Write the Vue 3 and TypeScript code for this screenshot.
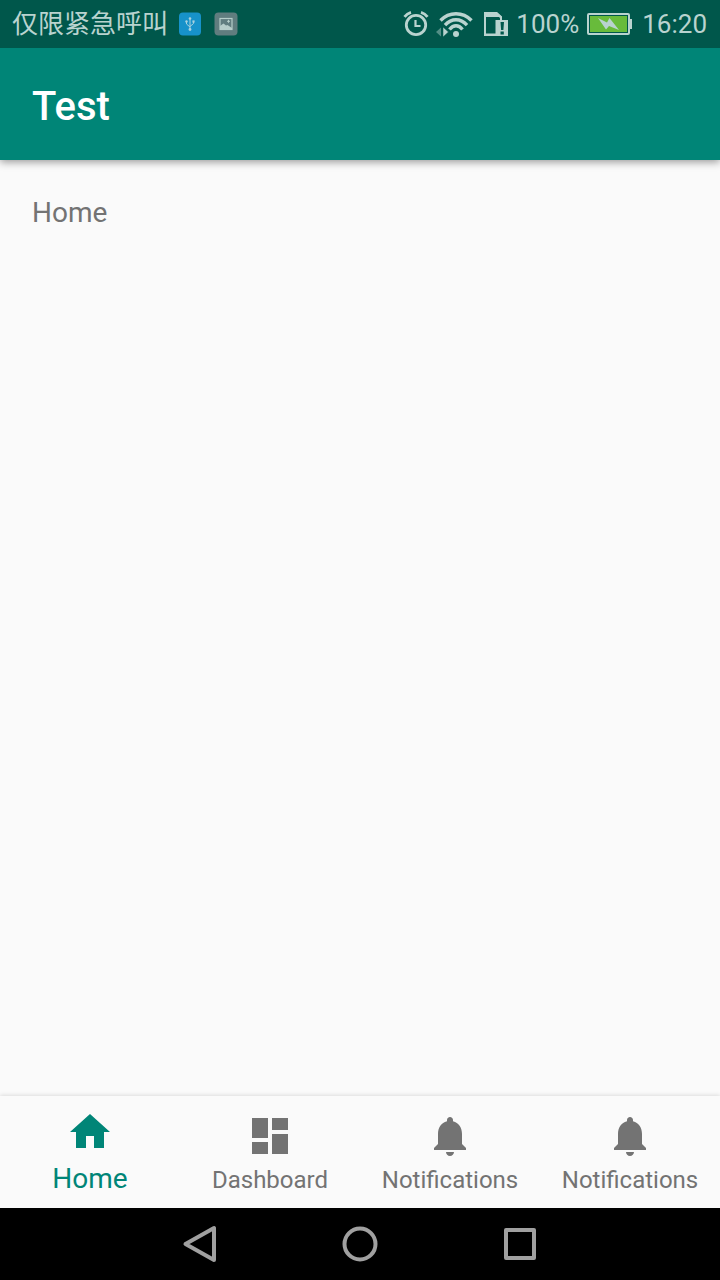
<script setup lang="ts">
import { ref } from 'vue'

interface Tab {
  id: string
  label: string
  icon: string
}

const bell =
  'M12 22c1.1 0 2-.9 2-2h-4c0 1.1.89 2 2 2zm6-6v-5c0-3.07-1.64-5.64-4.5-6.32V4c0-.83-.67-1.5-1.5-1.5s-1.5.67-1.5 1.5v.68C7.63 5.36 6 7.92 6 11v5l-2 2v1h16v-1l-2-2z'

const tabs: Tab[] = [
  { id: 'home', label: 'Home', icon: 'M10 20v-6h4v6h5v-8h3L12 3 2 12h3v8z' },
  { id: 'dashboard', label: 'Dashboard', icon: 'M3 13h8V3H3v10zm0 8h8v-6H3v6zm10 0h8V11h-8v10zm0-18v6h8V3h-8z' },
  { id: 'notifications', label: 'Notifications', icon: bell },
  { id: 'notifications-2', label: 'Notifications', icon: bell },
]

const selected = ref<Tab>(tabs[0])
</script>

<template>
  <div class="screen">
    <div class="status">
      <span class="carrier">仅限紧急呼叫</span>
      <svg class="usb" width="24" height="24" viewBox="0 0 24 24" aria-hidden="true">
        <rect x="1" y="0.5" width="22" height="23" rx="4" fill="#1792ca" />
        <g fill="none" stroke="#a9d2df" stroke-width="1">
          <path d="M12 6v12M8.500 9v3l3.500 3M15.500 9v2.500l-3.500 3" />
        </g>
        <g fill="#a9d2df">
          <circle cx="12" cy="6.500" r="1.300" />
          <circle cx="8.500" cy="9.500" r="1.200" />
          <rect x="14.400" y="8.400" width="2.200" height="2.200" />
          <circle cx="12" cy="17.500" r="1.400" />
        </g>
      </svg>
      <svg class="shot" width="24" height="24" viewBox="0 0 24 24" aria-hidden="true">
        <rect x="0.500" y="0.500" width="23" height="23" rx="4" fill="#607d7f" />
        <rect x="6" y="6.500" width="12" height="11" fill="none" stroke="#b5cdc9" stroke-width="1.200" />
        <path d="M6 14l3.500-2.500 2.500 2 1.500-.5 4.500 3v1.500H6z" fill="#b5cdc9" />
        <path d="M14.500 7.800v3M13 9.300h3" stroke="#b5cdc9" />
      </svg>
      <span class="grow"></span>
      <svg class="alarm" width="28" height="28" viewBox="0 0 28 28" aria-hidden="true">
        <g fill="none" stroke="currentColor">
          <circle cx="14" cy="15" r="9.700" stroke-width="2.800" />
          <path d="M13.500 10v6h5" stroke-width="2.200" />
          <path d="M2.500 6.800Q5 3.500 9 2.300M25.500 6.800Q23 3.500 19 2.300" stroke-width="2.800" />
        </g>
      </svg>
      <svg class="wifi" width="38" height="28" viewBox="0 0 38 28" aria-hidden="true">
        <g fill="none" stroke="currentColor" stroke-width="3.400">
          <path d="M4.500 10.500Q11 3.700 20 3.700T35.500 10.500" />
          <path d="M9 15.200Q14 9.800 20 9.800T31 15.200" />
          <path d="M13.500 19.500Q16.500 15.800 20 15.800T26.500 19.500" />
        </g>
        <circle cx="20" cy="24" r="3" fill="currentColor" />
        <path d="M0 22l5-4.500v9z" fill="currentColor" opacity=".45" />
        <path d="M7 17l5.500 5-5.500 5z" fill="currentColor" stroke="#00574b" stroke-width=".5" />
      </svg>
      <svg class="sim" width="26" height="26" viewBox="0 0 26 26" aria-hidden="true">
        <path d="M2 24V2h11l5 4.500V10" fill="none" stroke="currentColor" stroke-width="2" />
        <path d="M1 1h13l5 4.500V6H1zM1 22.500h12V25H1z" fill="currentColor" />
        <rect x="12.500" y="9" width="12.500" height="16" fill="currentColor" />
        <path d="M17.500 11h3.500l-.6 8h-2.300zM17.500 20.500h3.300v3h-3.300z" fill="#00574b" />
      </svg>
      <span class="percent">100%</span>
      <svg class="battery" width="46" height="24" viewBox="0 0 46 24" aria-hidden="true">
        <rect x="1" y="2" width="41" height="20" rx="1" fill="none" stroke="currentColor" stroke-width="2" />
        <rect x="3" y="4" width="37" height="16" fill="#68bb3b" />
        <path d="M43 7h2v10h-2z" fill="currentColor" />
        <path d="M11 6l9 4.500 2.500-4.500L32 18l-10-4-3 3.500z" fill="currentColor" />
      </svg>
      <span class="time">16:20</span>
    </div>

    <header class="toolbar"><h1>Test</h1></header>

    <main class="content"><p>{{ selected.label }}</p></main>

    <nav class="tabs">
      <button
        v-for="tab in tabs"
        :key="tab.id"
        type="button"
        class="tab"
        :class="{ active: tab.id === selected.id }"
        @click="selected = tab"
      >
        <svg width="48" height="48" viewBox="0 0 24 24" aria-hidden="true"><path :d="tab.icon" fill="currentColor" /></svg>
        <span>{{ tab.label }}</span>
      </button>
    </nav>

    <div class="system">
      <button type="button" aria-label="Back">
        <svg width="40" height="40" viewBox="0 0 40 40"><path d="M34 4v32L5.500 20z" /></svg>
      </button>
      <button type="button" aria-label="Home screen">
        <svg width="40" height="40" viewBox="0 0 40 40"><circle cx="20" cy="20" r="15.500" /></svg>
      </button>
      <button type="button" aria-label="Recent apps">
        <svg width="40" height="40" viewBox="0 0 40 40"><rect x="6" y="6" width="28" height="28" /></svg>
      </button>
    </div>
  </div>
</template>

<style>
body {
  margin: 0;
}
</style>

<style scoped>
.screen {
  display: flex;
  flex-direction: column;
  min-height: 100vh;
  background: #fafafa;
  font-family: Roboto, "Noto Sans CJK SC", sans-serif;
}
.status {
  position: relative;
  z-index: 1;
  display: flex;
  align-items: center;
  height: 48px;
  padding: 0 13px 0 12px;
  background: #00574b;
  color: #b9d3cf;
  font-size: 26px;
  line-height: 50px;
  white-space: nowrap;
}
.status svg {
  flex: none;
}
.usb {
  margin-left: 10px;
}
.shot {
  margin-left: 12px;
}
.grow {
  flex: 1;
}
.wifi {
  margin-left: 6px;
}
.sim {
  margin-left: 9px;
}
.percent {
  margin-left: 7px;
}
.battery {
  margin: 0 9px 0 8px;
}
.toolbar {
  display: flex;
  align-items: center;
  height: 112px;
  padding: 0 32px;
  background: #008577;
  color: #fff;
  box-shadow: 0 2px 8px rgba(0, 0, 0, 0.4);
}
.toolbar h1 {
  margin: 6px 0 0;
  font-size: 40px;
  font-weight: 500;
  line-height: 48px;
}
.content {
  flex: 1;
  padding: 36px 32px;
  color: #737373;
  font-size: 28px;
  line-height: 34px;
}
.content p {
  margin: 0;
}
.tabs {
  display: grid;
  grid-template-columns: repeat(4, 1fr);
  height: 112px;
  box-shadow: 0 -1px 4px rgba(0, 0, 0, 0.12);
}
.tab {
  display: flex;
  flex-direction: column;
  align-items: center;
  gap: 8px;
  padding: 16px 0 0;
  border: 0;
  background: none;
  color: #737373;
  font: inherit;
  font-size: 24px;
  line-height: 24px;
}
.tab.active {
  gap: 11px;
  padding-top: 12px;
  color: #008577;
  font-size: 28px;
}
.system {
  display: flex;
  align-items: center;
  justify-content: center;
  gap: 80px;
  height: 72px;
  background: #000;
}
.system button {
  width: 80px;
  height: 72px;
  padding: 0;
  border: 0;
  background: none;
}
.system svg {
  display: block;
  margin: auto;
  fill: none;
  stroke: #a0a0a0;
  stroke-width: 4;
  stroke-linejoin: round;
}
</style>
